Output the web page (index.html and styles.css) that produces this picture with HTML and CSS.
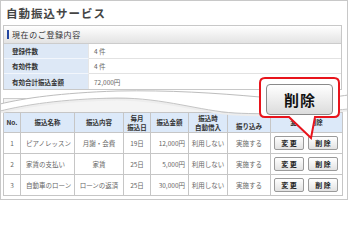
FILE: index.html
```html
<!DOCTYPE html>
<html lang="ja">
<head>
<meta charset="utf-8">
<title>自動振込サービス</title>
<link rel="stylesheet" href="styles.css">
</head>
<body>
<div class="frame">
  <h1 class="title">自動振込サービス</h1>

  <section class="card info">
    <div class="card-head"><span class="bar"></span>現在のご登録内容</div>
    <div class="info-row"><div class="lbl">登録件数</div><div class="val">4 件</div></div>
    <div class="info-row"><div class="lbl">有効件数</div><div class="val">4 件</div></div>
    <div class="info-row"><div class="lbl">有効合計振込金額</div><div class="val">72,000円</div></div>
  </section>

  <section class="card list">
    <div class="list-top"></div>
    <table class="grid">
      <colgroup>
        <col class="c-no"><col class="c-name"><col class="c-cont"><col class="c-day">
        <col class="c-amt"><col class="c-loan"><col class="c-hol"><col class="c-ops">
      </colgroup>
      <thead>
        <tr>
          <th>No.</th><th>振込名称</th><th>振込内容</th><th>毎月<br>振込日</th>
          <th>振込金額</th><th>振込時<br>自動借入</th><th class="low">振り込み</th><th>変更・削除</th>
        </tr>
      </thead>
      <tbody>
        <tr>
          <td class="ctr">1</td><td class="name">ピアノレッスン</td><td class="ctr">月謝・会費</td><td class="ctr">19日</td>
          <td class="amt">12,000円</td><td class="ctr">利用しない</td><td class="ctr">実施する</td>
          <td><div class="ops"><span class="btn">変更</span><span class="btn">削除</span></div></td>
        </tr>
        <tr>
          <td class="ctr">2</td><td class="name">家賃の支払い</td><td class="ctr">家賃</td><td class="ctr">25日</td>
          <td class="amt">5,000円</td><td class="ctr">利用しない</td><td class="ctr">実施する</td>
          <td><div class="ops"><span class="btn">変更</span><span class="btn">削除</span></div></td>
        </tr>
        <tr>
          <td class="ctr">3</td><td class="name">自動車のローン</td><td class="ctr">ローンの返済</td><td class="ctr">25日</td>
          <td class="amt">30,000円</td><td class="ctr">利用しない</td><td class="ctr">実施する</td>
          <td><div class="ops"><span class="btn">変更</span><span class="btn">削除</span></div></td>
        </tr>
      </tbody>
    </table>
  </section>

  <svg class="tear" width="348" height="34" viewBox="0 0 348 34" aria-hidden="true">
    <path d="M0,18 C25,12 60,7 117,5 C170,4 215,7 260,11 C300,14 330,12 348,9 L348,23 C320,26 270,29 235,27 C200,25 165,12 117,12 C60,13 25,19 0,25 Z" fill="#fff"/>
    <path d="M0,26.5 C25,20.5 60,14.5 117,13.5 C165,13.5 200,26.5 235,28.5 C270,30.5 320,27.5 348,24.5" fill="none" stroke="#ededed" stroke-width="2"/>
    <path d="M0,18 C25,12 60,7 117,5 C170,4 215,7 260,11 C300,14 330,12 348,9" fill="none" stroke="#bdbdbd" stroke-width="1"/>
    <path d="M0,25 C25,19 60,13 117,12 C165,12 200,25 235,27 C270,29 320,26 348,23" fill="none" stroke="#c4c4c4" stroke-width="1"/>
  </svg>

  <div class="callout">
    <svg class="bubble" width="84" height="64" viewBox="0 0 84 64" aria-hidden="true">
      <path d="M7,2 H76 Q81,2 81,7 V36 Q81,41 76,41 H57 L53,62 L31,41 H7 Q2,41 2,36 V7 Q2,2 7,2 Z" fill="#fff" stroke="#e8141c" stroke-width="2" stroke-linejoin="miter"/>
    </svg>
    <span class="big-btn">削除</span>
  </div>
</div>
</body>
</html>
```

FILE: styles.css
```css
* {
  box-sizing: border-box;
  margin: 0;
  padding: 0;
}

body {
  margin: 0;
  background: #fff;
  font-family: "Noto Sans CJK JP", "Noto Sans", sans-serif;
}

.frame {
  position: relative;
  width: 348px;
  height: 200px;
  border: 1px solid #c8c8c8;
  overflow: hidden;
  background: #fff;
}

.title {
  height: 24px;
  line-height: 24px;
  padding-left: 5px;
  font-size: 11.5px;
  font-weight: bold;
  color: #444;
  letter-spacing: 1px;
}

.card {
  margin-left: 2px;
  width: 339px;
}

.info {
  border: 1px solid #c8c8c8;
}

.card-head {
  height: 18px;
  display: flex;
  align-items: center;
  gap: 3px;
  padding-left: 3px;
  border-bottom: 1px solid #cccccc;
  background: linear-gradient(#ffffff, #e3e3e3);
  font-size: 8px;
  color: #333;
  letter-spacing: 0.6px;
}

.bar {
  width: 2px;
  height: 9px;
  background: #2447a0;
}

.info-row {
  display: grid;
  grid-template-columns: 85px 1fr;
  height: 15px;
  font-size: 6.5px;
}

.lbl {
  display: flex;
  align-items: center;
  padding-left: 8px;
  background: #dde8f6;
  border-bottom: 1px solid #f2f6fc;
  border-right: 1px solid #e6e6e6;
  color: #333;
  font-weight: bold;
}

.val {
  display: flex;
  align-items: center;
  padding-left: 5px;
  border-bottom: 1px solid #e2e2e2;
  color: #666;
}

.info-row:last-child .lbl,
.info-row:last-child .val {
  border-bottom: none;
}

.list {
  margin-top: 8px;
}

.list-top {
  height: 14px;
  border: 1px solid #cccccc;
  border-bottom: none;
  background: #f4f4f4;
}

.grid {
  width: 339px;
  table-layout: fixed;
  border-collapse: collapse;
  font-size: 6.5px;
  color: #666;
}

.c-no { width: 17px; }
.c-name { width: 54px; }
.c-cont { width: 49px; }
.c-day { width: 27px; }
.c-amt { width: 38px; }
.c-loan { width: 39px; }
.c-hol { width: 43px; }
.c-ops { width: 72px; }

.grid th,
.grid td {
  border: 1px solid #c6c6c6;
  white-space: nowrap;
  overflow: hidden;
}

.grid th {
  height: 20px;
  background: #dce9f9;
  color: #333;
  font-weight: bold;
  line-height: 8.5px;
  text-align: center;
}

.grid th.low {
  padding-top: 8px;
}

.grid td {
  height: 21px;
  background: #fff;
}

.ctr {
  text-align: center;
}

.name {
  padding-left: 5px;
}

.amt {
  text-align: right;
  padding-right: 3px;
}

.ops {
  display: flex;
  gap: 4px;
  padding-left: 3px;
}

.btn {
  width: 30px;
  height: 14px;
  border: 1px solid #9a9a9a;
  border-radius: 2px;
  background: linear-gradient(#ffffff, #e2e2e2);
  font-size: 7px;
  font-weight: bold;
  color: #222;
  letter-spacing: 1.5px;
  line-height: 12px;
  text-align: center;
  padding-left: 1.5px;
}

.tear {
  position: absolute;
  left: -1px;
  top: 85px;
}

.callout {
  position: absolute;
  left: 257px;
  top: 75px;
  width: 84px;
  height: 64px;
}

.bubble {
  position: absolute;
  left: 0;
  top: 0;
}

.big-btn {
  position: absolute;
  left: 8px;
  top: 8px;
  width: 67px;
  height: 31px;
  display: flex;
  align-items: center;
  justify-content: center;
  border: 1px solid #8a8a8a;
  border-radius: 4px;
  background: linear-gradient(#ffffff, #dcdcdc);
  font-size: 15px;
  font-weight: bold;
  color: #111;
  letter-spacing: 1px;
  padding-left: 1px;
}
```
